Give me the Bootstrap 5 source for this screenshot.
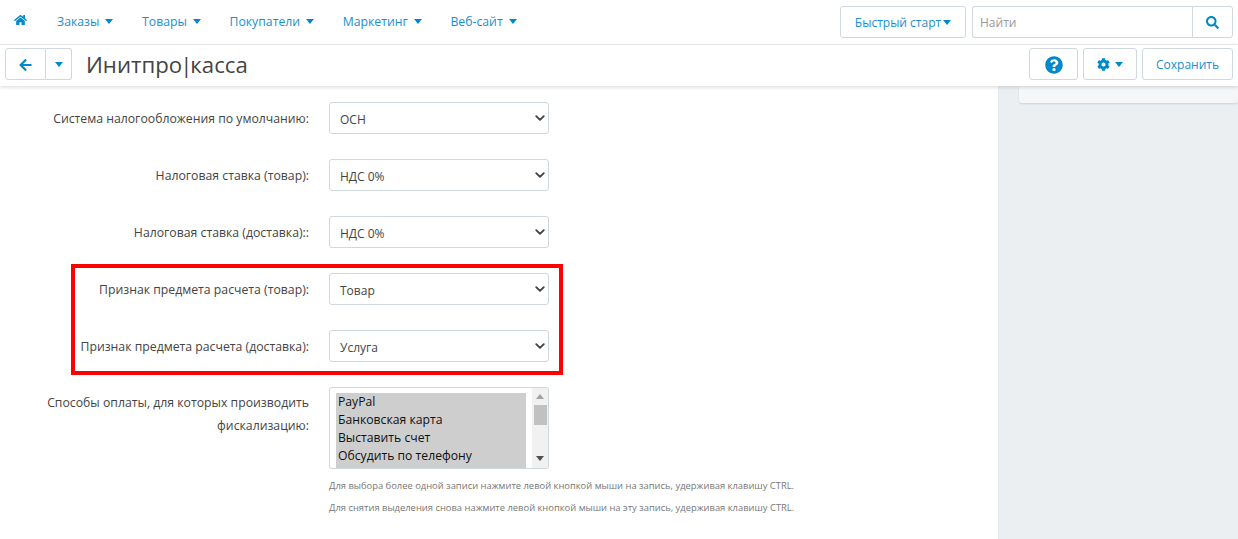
<!DOCTYPE html>
<html lang="ru"><head><meta charset="utf-8"><title>Инитпро|касса</title>
<link href="https://cdn.jsdelivr.net/npm/bootstrap@5.3.0/dist/css/bootstrap.min.css" rel="stylesheet">
<style>
html,body{height:539px;overflow:hidden}
body{font-family:"Open Sans","Noto Sans",sans-serif;font-size:12px;color:#444;background:#fff}
.ico{fill:#0088cc;display:block}
.topbar{height:45px;border-bottom:1px solid #eef0f2;padding:6px 5px 0 0;background:#fff}
.menu-link{color:#1a8fcf;font-size:12.25px;text-decoration:none;padding:0;line-height:32px}
.menu-link.dropdown-toggle::after,.tool-btn.dropdown-toggle::after{border-top:5px solid #0088cc;border-left:4px solid transparent;border-right:4px solid transparent;border-bottom:0;margin-left:6px;vertical-align:2px}
.menu-home{margin:0 0 0 14px;width:13px}
.menu-gap{gap:28.6px;margin-left:30px}
.tool-btn{height:32px;background:#fff;border:1px solid #cfd8dc;border-radius:3px;color:#1a8fcf;font-size:12px;padding:1px 0 0;display:flex;align-items:center;justify-content:center}
.tool-btn:hover{color:#1a8fcf;background:#fff;border-color:#cfd8dc}
.start-btn{width:126px;margin-right:6px}
.start-btn.dropdown-toggle::after{margin-left:2px}
.find{width:261px;height:32px}
.find input{height:32px;font-size:12px;border:1px solid #cfd8dc;border-right:0;border-radius:3px 0 0 3px;padding:1px 7px 0;box-shadow:none}
.find input::placeholder{color:#999}
.find .tool-btn{width:41px;flex:none;margin-left:0!important;border-radius:0 3px 3px 0}
.actionbar{height:41px;padding:3px 5px 0;background:#fff;box-shadow:0 1px 4px rgba(0,0,0,.16);position:relative;z-index:2}
.back-a{width:41px;height:32px;border-radius:3px 0 0 3px}
.back-b{width:26px;height:32px;border-radius:0 3px 3px 0;border-left:0}
.back-b.dropdown-toggle::after{margin:0}
.page-name{font-size:22.2px;font-weight:400;color:#444;margin:1px 0 0 14px;line-height:32px}
.pipe{margin:0 -2px}
.help-btn{width:49px;margin-right:5px}
.cog-btn{width:54px;margin-right:5px}
.cog-btn.dropdown-toggle::after{margin-left:5px;vertical-align:0}
.save-btn{width:91px}
.body-wrap{height:453px}
.main-pane{width:999px;background:#fff;padding-top:16px;border-right:1px solid #e4e7ea}
.side-pane{background:#eceff1;padding-left:20px}
.side-card{height:17px;background:#f5f6f7;border-radius:0 0 3px 3px;box-shadow:0 1px 2px rgba(0,0,0,.12)}
.frow{display:flex;margin-bottom:25px}
.frow label{margin:0;width:261px;margin-left:48px;margin-right:20px;text-align:right;line-height:34px;height:32px;color:#444;font-size:12.25px}
.form-select.pick{width:220px;height:32px;font-size:12px;color:#444;border-color:#cfd8dc;border-radius:3px;padding:3px 24px 0 10px;box-shadow:none;background-image:url("data:image/svg+xml,%3csvg xmlns='http://www.w3.org/2000/svg' viewBox='0 0 16 16'%3e%3cpath fill='none' stroke='%23444' stroke-linecap='round' stroke-linejoin='round' stroke-width='3' d='m2 5 6 6 6-6'/%3e%3c/svg%3e");background-position:right 3px center;background-size:10px 10px}
.mark-box{margin-left:71px;width:492px;height:111px;border:4px solid #f00;padding-top:5px;margin-top:-9px;margin-bottom:12px}
.mark-box .frow label{width:234px;margin-left:0}
.frow.list-row label{line-height:23px;padding-top:4px;height:auto;width:281px;margin-left:28px;flex:none}
.list-wrap{position:relative;width:220px;height:82px}
.form-select.pick-list[multiple]{width:220px;height:82px;font-size:12.2px;line-height:18px;color:#222;border:1px solid #cfd8dc;border-radius:3px;padding:5px 22px 0 6px;box-shadow:none;display:block;background-image:none}
.pick-list option{padding:0 2px;min-height:18px}
.pick-list option:last-child{padding-bottom:4px}
.fake-bar{position:absolute;top:1px;right:1px;bottom:1px;width:16px;background:#f1f1f1;border-radius:0 2px 2px 0}
.bar-up,.bar-down{position:absolute;left:4px;width:0;height:0;border-left:4px solid transparent;border-right:4px solid transparent}
.bar-up{top:6px;border-bottom:5px solid #a3a3a3}
.bar-down{bottom:7px;border-top:5px solid #505050}
.bar-thumb{position:absolute;top:17px;left:2px;width:13px;height:20px;background:#c1c1c1}
.hint{font-size:9.4px;color:#777;margin:0 0 0 329px;line-height:12px;padding-top:11px;height:22px;white-space:nowrap}
</style></head><body>
<div class="topbar d-flex align-items-start">
  <svg class="ico menu-home mt-2" viewBox="0 0 576 512" width="13" height="12"><path d="M280.37 148.26L96 300.11V464a16 16 0 0 0 16 16l112.06-.29a16 16 0 0 0 15.92-16V368a16 16 0 0 1 16-16h64a16 16 0 0 1 16 16v95.64a16 16 0 0 0 16 16.05L464 480a16 16 0 0 0 16-16V300L295.67 148.26a12.19 12.19 0 0 0-15.3 0zM571.6 251.47L488 182.56V44.05a12 12 0 0 0-12-12h-56a12 12 0 0 0-12 12v72.61L318.47 43a48 48 0 0 0-61 0L4.34 251.47a12 12 0 0 0-1.6 16.9l25.5 31A12 12 0 0 0 45.15 301l235.22-193.74a12.19 12.19 0 0 1 15.3 0L530.9 301a12 12 0 0 0 16.9-1.6l25.5-31a12 12 0 0 0-1.7-16.93z"/></svg>
  <nav class="d-flex menu-gap">
    <a class="menu-link dropdown-toggle" href="#">Заказы</a>
    <a class="menu-link dropdown-toggle" href="#">Товары</a>
    <a class="menu-link dropdown-toggle" href="#">Покупатели</a>
    <a class="menu-link dropdown-toggle" href="#">Маркетинг</a>
    <a class="menu-link dropdown-toggle" href="#">Веб-сайт</a>
  </nav>
  <div class="ms-auto d-flex">
    <button class="btn tool-btn start-btn dropdown-toggle" type="button">Быстрый старт</button>
    <div class="input-group find flex-nowrap">
      <input class="form-control" type="text" placeholder="Найти">
      <button class="btn tool-btn" type="button"><svg class="ico" viewBox="0 0 512 512" width="13" height="13"><path d="M505 442.7L405.3 343c-4.5-4.5-10.6-7-17-7H372c27.6-35.3 44-79.7 44-128C416 93.1 322.9 0 208 0S0 93.1 0 208s93.1 208 208 208c48.3 0 92.7-16.4 128-44v16.3c0 6.4 2.5 12.5 7 17l99.7 99.7c9.4 9.4 24.6 9.4 33.9 0l28.3-28.3c9.4-9.4 9.4-24.6.1-34zM208 336c-70.7 0-128-57.2-128-128 0-70.7 57.2-128 128-128 70.7 0 128 57.2 128 128 0 70.7-57.2 128-128 128z"/></svg></button>
    </div>
  </div>
</div>
<div class="actionbar d-flex align-items-start">
  <div class="d-flex">
    <button class="btn tool-btn back-a" type="button"><svg class="ico" viewBox="0 0 448 512" width="13" height="14"><path d="M257.5 445.1l-22.2 22.2c-9.4 9.4-24.6 9.4-33.9 0L7 273c-9.4-9.4-9.4-24.6 0-33.9L201.4 44.7c9.4-9.4 24.6-9.4 33.9 0l22.2 22.2c9.5 9.5 9.3 25-.4 34.3L136.6 216H424c13.3 0 24 10.7 24 24v32c0 13.3-10.7 24-24 24H136.6l120.5 114.8c9.8 9.3 10 24.8.4 34.3z"/></svg></button>
    <button class="btn tool-btn back-b dropdown-toggle" type="button"></button>
  </div>
  <h1 class="page-name">Инитпро<span class="pipe">|</span>касса</h1>
  <div class="ms-auto d-flex">
    <button class="btn tool-btn help-btn" type="button"><svg class="ico" viewBox="0 0 512 512" width="18" height="18"><path d="M504 256c0 136.997-111.043 248-248 248S8 392.997 8 256C8 119.083 119.043 8 256 8s248 111.083 248 248zM262.655 90c-54.497 0-89.255 22.957-116.549 63.758-3.536 5.286-2.353 12.415 2.715 16.258l34.699 26.31c5.205 3.947 12.621 3.008 16.665-2.122 17.864-22.658 30.113-35.797 57.303-35.797 20.429 0 45.698 13.148 45.698 32.958 0 14.976-12.363 22.667-32.534 33.976C247.128 238.528 216 254.941 216 296v4c0 6.627 5.373 12 12 12h56c6.627 0 12-5.373 12-12v-1.333c0-28.462 83.186-29.647 83.186-106.667 0-58.002-60.165-102-116.531-102zM256 338c-25.365 0-46 20.635-46 46 0 25.364 20.635 46 46 46s46-20.636 46-46c0-25.365-20.635-46-46-46z"/></svg></button>
    <button class="btn tool-btn cog-btn dropdown-toggle" type="button"><svg class="ico" viewBox="0 0 512 512" width="13" height="13"><path d="M487.4 315.7l-42.6-24.6c4.3-23.2 4.3-47 0-70.2l42.6-24.6c4.9-2.8 7.1-8.6 5.5-14-11.1-35.6-30-67.8-54.7-94.6-3.8-4.1-10-5.1-14.8-2.3L380.8 110c-17.9-15.4-38.5-27.3-60.8-35.1V25.8c0-5.6-3.9-10.5-9.4-11.7-36.7-8.2-74.3-7.8-109.2 0-5.5 1.2-9.4 6.1-9.4 11.7V75c-22.2 7.9-42.8 19.8-60.8 35.1L88.7 85.5c-4.9-2.8-11-1.9-14.8 2.3-24.7 26.7-43.6 58.9-54.7 94.6-1.7 5.4.6 11.2 5.5 14L67.3 221c-4.3 23.2-4.3 47 0 70.2l-42.6 24.6c-4.9 2.8-7.1 8.6-5.5 14 11.1 35.6 30 67.8 54.7 94.6 3.8 4.1 10 5.1 14.8 2.3l42.6-24.6c17.9 15.4 38.5 27.3 60.8 35.1v49.2c0 5.6 3.9 10.5 9.4 11.7 36.7 8.2 74.3 7.8 109.2 0 5.5-1.2 9.4-6.1 9.4-11.7v-49.2c22.2-7.9 42.8-19.8 60.8-35.1l42.6 24.6c4.9 2.8 11 1.9 14.8-2.3 24.7-26.7 43.6-58.9 54.7-94.6 1.5-5.5-.7-11.3-5.6-14.1zM256 336c-44.1 0-80-35.9-80-80s35.9-80 80-80 80 35.9 80 80-35.9 80-80 80z"/></svg></button>
    <button class="btn tool-btn save-btn" type="button">Сохранить</button>
  </div>
</div>
<div class="d-flex body-wrap">
  <main class="main-pane flex-shrink-0">
    <div class="frow"><label>Система налогообложения по умолчанию:</label><select class="form-select pick"><option>ОСН</option></select></div>
    <div class="frow"><label>Налоговая ставка (товар):</label><select class="form-select pick"><option>НДС 0%</option></select></div>
    <div class="frow"><label>Налоговая ставка (доставка)::</label><select class="form-select pick"><option>НДС 0%</option></select></div>
    <div class="mark-box">
      <div class="frow"><label>Признак предмета расчета (товар):</label><select class="form-select pick"><option>Товар</option></select></div>
      <div class="frow"><label>Признак предмета расчета (доставка):</label><select class="form-select pick"><option>Услуга</option></select></div>
    </div>
    <div class="frow list-row mb-0"><label>Способы оплаты, для которых производить фискализацию:</label>
      <div class="list-wrap">
        <select class="form-select pick-list" multiple>
          <option selected>PayPal</option><option selected>Банковская карта</option><option selected>Выставить счет</option><option selected>Обсудить по телефону</option>
        </select>
        <div class="fake-bar" aria-hidden="true"><span class="bar-up"></span><span class="bar-thumb"></span><span class="bar-down"></span></div>
      </div></div>
    <p class="hint">Для выбора более одной записи нажмите левой кнопкой мыши на запись, удерживая клавишу CTRL.</p>
    <p class="hint">Для снятия выделения снова нажмите левой кнопкой мыши на эту запись, удерживая клавишу CTRL.</p>
  </main>
  <aside class="side-pane flex-grow-1"><div class="side-card"></div></aside>
</div>
<script src="https://cdn.jsdelivr.net/npm/bootstrap@5.3.0/dist/js/bootstrap.bundle.min.js"></script>
</body></html>
